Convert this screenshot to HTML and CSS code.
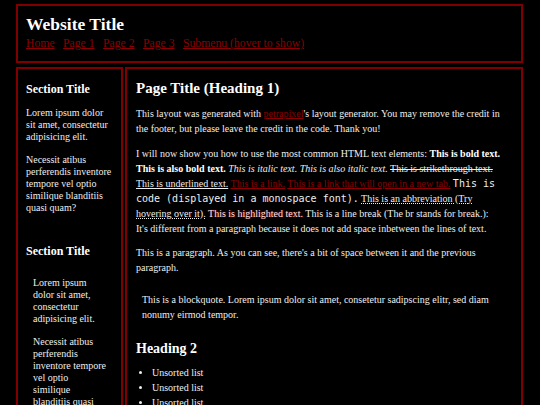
FILE: index.html
```html
<!DOCTYPE html>
<html lang="en">
<head>
<meta charset="utf-8">
<title>Layout</title>
<link rel="stylesheet" href="styles.css">
</head>
<body>
<div class="container">
  <header class="header">
    <div class="site-title">Website Title</div>
    <nav class="nav">
      <a href="#">Home</a>
      <a href="#">Page 1</a>
      <a href="#">Page 2</a>
      <a href="#">Page 3</a>
      <a href="#">Submenu (hover to show)</a>
    </nav>
  </header>
  <div class="columns">
    <aside class="sidebar">
      <section class="side-section">
        <h2 class="side-title">Section Title</h2>
        <p>Lorem ipsum dolor sit amet, consectetur adipisicing elit.</p>
        <p>Necessit atibus perferendis inventore tempore vel optio similique blanditiis quasi quam?</p>
      </section>
      <section class="side-section">
        <h2 class="side-title">Section Title</h2>
        <div class="side-box">
          <p>Lorem ipsum dolor sit amet, consectetur adipisicing elit.</p>
          <p>Necessit atibus perferendis inventore tempore vel optio similique blanditiis quasi quam?</p>
        </div>
      </section>
    </aside>
    <main class="main">
      <h1 class="page-title">Page Title (Heading 1)</h1>
      <p>This layout was generated with <a href="#">petrapixel</a>'s layout generator. You may remove the credit in the footer, but please leave the credit in the code. Thank you!</p>
      <p>I will now show you how to use the most common HTML text elements: <strong>This is bold text.</strong> <b>This is also bold text.</b> <em>This is italic text.</em> <i>This is also italic text.</i> <s>This is strikethrough text.</s> <u>This is underlined text.</u> <a href="#">This is a link.</a> <a href="#">This is a link that will open in a new tab.</a> <code>This is code (displayed in a monospace font).</code> <abbr title="Abbreviation">This is an abbreviation (Try hovering over it).</abbr> <mark>This is highlighted text.</mark> This is a line break (The br stands for break.):<br>It's different from a paragraph because it does not add space inbetween the lines of text.</p>
      <p>This is a paragraph. As you can see, there's a bit of space between it and the previous paragraph.</p>
      <blockquote class="quote">This is a blockquote. Lorem ipsum dolor sit amet, consetetur sadipscing elitr, sed diam nonumy eirmod tempor.</blockquote>
      <h2 class="heading-2">Heading 2</h2>
      <ul class="list">
        <li>Unsorted list</li>
        <li>Unsorted list</li>
        <li>Unsorted list</li>
      </ul>
    </main>
  </div>
</div>
</body>
</html>
```

FILE: styles.css
```css
html, body {
  margin: 0;
  padding: 0;
  background: #000;
}

body {
  color: #eee;
  font-family: "Liberation Serif", "Times New Roman", serif;
  font-size: 10px;
}

a {
  color: #8b0000;
  text-decoration: underline;
}

.container {
  width: 507px;
  margin: 4px 0 0 16px;
}

.header {
  border: 2px solid #800000;
  padding: 8px 8px 10px 8px;
}

.site-title {
  font-size: 17.5px;
  line-height: 20px;
  font-weight: bold;
  color: #fff;
}

.nav {
  display: flex;
  gap: 8.5px;
  margin-top: 3px;
  font-size: 11.7px;
  line-height: 14px;
}

.columns {
  display: flex;
  align-items: flex-start;
  gap: 2px;
  margin-top: 4px;
}

.sidebar {
  width: 107px;
  flex: none;
  box-sizing: border-box;
  border: 2px solid #800000;
  padding: 13px 8px 8px 8px;
  height: 420px;
  overflow: hidden;
}

.side-section + .side-section {
  margin-top: 30px;
}

.side-title {
  font-size: 12px;
  line-height: 14px;
  font-weight: bold;
  color: #fff;
  margin: 0 0 11px 0;
}

.sidebar p {
  margin: 0 0 11px 0;
  line-height: 12px;
}

.side-box {
  padding: 8px 6px 0 7px;
}

.main {
  flex: 1;
  box-sizing: border-box;
  border: 2px solid #800000;
  padding: 10px 15px 9px 9px;
  height: 420px;
  overflow: hidden;
}

.page-title {
  font-size: 15px;
  line-height: 18px;
  font-weight: bold;
  color: #fff;
  margin: 0 0 9px 0;
}

.main p {
  margin: 0 0 9.5px 0;
  line-height: 15px;
}

strong, b {
  color: #fff;
}

code {
  font-family: "DejaVu Sans Mono", monospace;
  font-size: 10px;
}

abbr {
  text-decoration: underline dotted;
}

mark {
  background: transparent;
  color: #ffe0e0;
  text-shadow: 0 0 2px rgba(255, 0, 0, 0.7);
}

.quote {
  margin: 0;
  padding: 7px 6px 9px 6px;
  line-height: 15px;
}

.heading-2 {
  font-size: 14px;
  line-height: 17px;
  font-weight: bold;
  color: #fff;
  margin: 9px 0 8px 0;
}

.list {
  margin: 0;
  padding-left: 16px;
  line-height: 15px;
}
```
